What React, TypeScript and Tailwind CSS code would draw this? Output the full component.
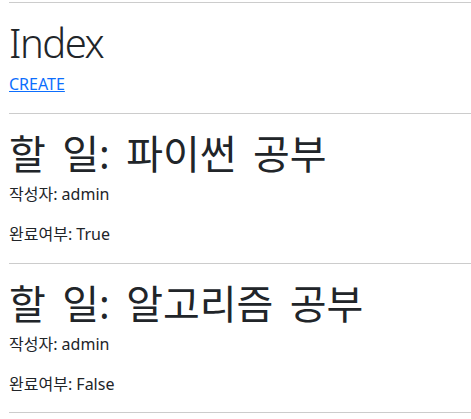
const todos = [
  { title: "파이썬 공부", author: "admin", done: "True", gap: "mt-[17px]" },
  { title: "알고리즘 공부", author: "admin", done: "False", gap: "mt-[16px]" },
];

export default function App() {
  return (
    <div
      className="min-h-[419px] bg-white pl-[9px] pt-[2px] text-[#212529]"
      style={{ fontFamily: '"Noto Sans", "Noto Sans CJK KR", sans-serif' }}
    >
      <hr className="border-t border-[#cccccc]" />
      <h1 className="mt-[16px] text-[40px] leading-[48px] font-light tracking-[-1.5px]">Index</h1>
      <a href="#" className="mt-[5px] block text-[16px] leading-[24px] text-[#0d6efd] underline">
        CREATE
      </a>
      <hr className="mt-[17px] border-t border-[#cccccc]" />
      {todos.map((t) => (
        <div key={t.title}>
          <h1 className="mt-[16px] text-[40px] leading-[48px] [word-spacing:6px]">할 일: {t.title}</h1>
          <p className="mt-[4px] text-[16px] leading-[24px]">작성자: {t.author}</p>
          <p className="mt-[16px] text-[16px] leading-[24px]">완료여부: {t.done}</p>
          <hr className={`${t.gap} border-t border-[#cccccc]`} />
        </div>
      ))}
    </div>
  );
}
